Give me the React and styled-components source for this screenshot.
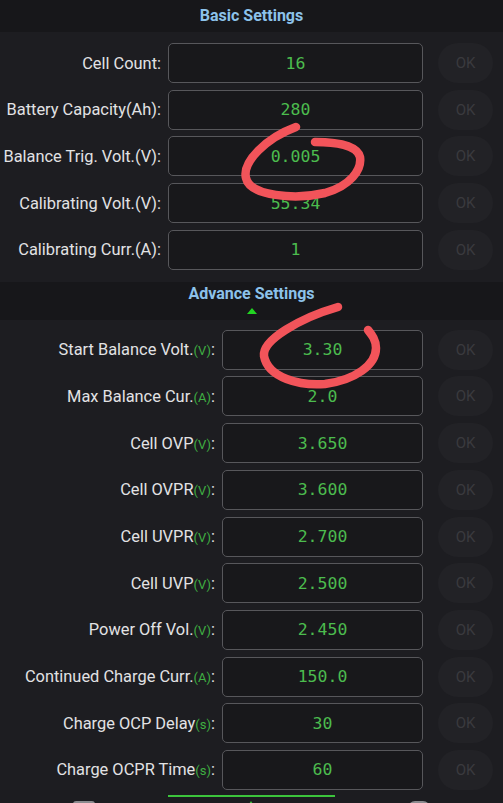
import React from "react";
import styled, { createGlobalStyle } from "styled-components";

const Global = createGlobalStyle`
  html, body {
    margin: 0;
    background: #1c1c20;
    height: 803px;
    overflow: hidden;
  }
  * { box-sizing: border-box; }
`;

const Page = styled.div`
  position: relative;
  width: 503px;
  font-family: Roboto, "Noto Sans", sans-serif;
`;

const Header = styled.div`
  height: ${(p) => p.h}px;
  background: #17171a;
  display: flex;
  flex-direction: column;
  align-items: center;
  padding-top: ${(p) => p.pt}px;
`;

const Title = styled.div`
  color: #8cc2ea;
  font-size: 16px;
  font-weight: 700;
  line-height: 19px;
`;

const Caret = styled.div`
  margin-top: 5px;
  width: 0;
  height: 0;
  border-left: 5px solid transparent;
  border-right: 5px solid transparent;
  border-bottom: 6px solid #22d422;
`;

const Section = styled.div`
  background: #1d1d21;
  padding: ${(p) => p.pt}px 10px ${(p) => p.pb}px 0;
  display: flex;
  flex-direction: column;
  gap: 6.7px;
`;

const Row = styled.div`
  display: flex;
  align-items: center;
  height: 40px;
`;

const Label = styled.div`
  width: ${(p) => p.w}px;
  text-align: right;
  color: #e2e2e4;
  font-size: 16.4px;
  white-space: nowrap;
`;

const Unit = styled.span`
  color: #3fae42;
  font-size: 13px;
`;

const Field = styled.div`
  flex: 1;
  height: 40px;
  margin-left: 7px;
  border: 1.5px solid #57575b;
  border-radius: 5px;
  background: #18181b;
  display: flex;
  align-items: center;
  justify-content: center;
  color: #4cbc4e;
  font-family: "DejaVu Sans Mono", "Liberation Mono", monospace;
  font-size: 16.5px;
`;

const OkButton = styled.div`
  width: 55px;
  height: 40px;
  margin-left: 15px;
  border-radius: 20px;
  background: #222226;
  color: #3a3a3e;
  font-size: 15px;
  display: flex;
  align-items: center;
  justify-content: center;
`;

const Nav = styled.div`
  height: 40px;
  background: #1c1c20;
  display: grid;
  grid-template-columns: repeat(3, 1fr);
  padding-top: 5px;
`;

const Tab = styled.div`
  display: flex;
  flex-direction: column;
  align-items: center;
  gap: 2px;
`;

const Indicator = styled.div`
  width: 100%;
  height: 2px;
  background: ${(p) => (p.active ? "#3cc43c" : "transparent")};
`;

const Overlay = styled.svg`
  position: absolute;
  left: 0;
  top: 0;
  pointer-events: none;
`;

const basic = [
  ["Cell Count:", "16"],
  ["Battery Capacity(Ah):", "280"],
  ["Balance Trig. Volt.(V):", "0.005"],
  ["Calibrating Volt.(V):", "55.34"],
  ["Calibrating Curr.(A):", "1"],
];

const advance = [
  ["Start Balance Volt.", "V", "3.30"],
  ["Max Balance Cur.", "A", "2.0"],
  ["Cell OVP", "V", "3.650"],
  ["Cell OVPR", "V", "3.600"],
  ["Cell UVPR", "V", "2.700"],
  ["Cell UVP", "V", "2.500"],
  ["Power Off Vol.", "V", "2.450"],
  ["Continued Charge Curr.", "A", "150.0"],
  ["Charge OCP Delay", "s", "30"],
  ["Charge OCPR Time", "s", "60"],
];

export default function App() {
  return (
    <Page>
      <Global />
      <Header h={32} pt={6}>
        <Title>Basic Settings</Title>
      </Header>
      <Section pt={11} pb={12}>
        {basic.map(([label, value]) => (
          <Row key={label}>
            <Label w={161}>{label}</Label>
            <Field>{value}</Field>
            <OkButton>OK</OkButton>
          </Row>
        ))}
      </Section>
      <Header h={38} pt={2}>
        <Title>Advance Settings</Title>
        <Caret />
      </Header>
      <Section pt={10} pb={0}>
        {advance.map(([label, unit, value]) => (
          <Row key={label}>
            <Label w={215}>
              {label}
              <Unit>({unit})</Unit>:
            </Label>
            <Field>{value}</Field>
            <OkButton>OK</OkButton>
          </Row>
        ))}
      </Section>
      <Nav>
        <Tab>
          <Indicator />
          <svg width="24" height="24" viewBox="0 0 24 24">
            <rect x="2" y="3" width="20" height="18" rx="2" fill="none" stroke="#8a8a8e" strokeWidth="2" />
          </svg>
        </Tab>
        <Tab>
          <Indicator active />
          <svg width="24" height="24" viewBox="0 0 24 24">
            <path d="M12 2 L20 14 H4 Z" fill="#3cc43c" />
          </svg>
        </Tab>
        <Tab>
          <Indicator />
          <svg width="24" height="24" viewBox="0 0 24 24">
            <rect x="2" y="3" width="20" height="18" rx="6" fill="none" stroke="#8a8a8e" strokeWidth="2" />
          </svg>
        </Tab>
      </Nav>
      <Overlay width="503" height="803" viewBox="0 0 503 803">
        <path
          d="M296 127 C266 138 242 162 246 178 C250 196 295 200 325 193 C350 186 362 170 360 157 C357 145 335 142 315 142"
          fill="none"
          stroke="#f2545a"
          strokeWidth="8.5"
          strokeLinecap="round"
        />
        <path
          d="M338 307 C300 318 262 340 264 356 C268 378 300 386 325 384 C355 380 376 365 376 348 C376 340 372 335 368 330"
          fill="none"
          stroke="#f2545a"
          strokeWidth="8.5"
          strokeLinecap="round"
        />
      </Overlay>
    </Page>
  );
}
